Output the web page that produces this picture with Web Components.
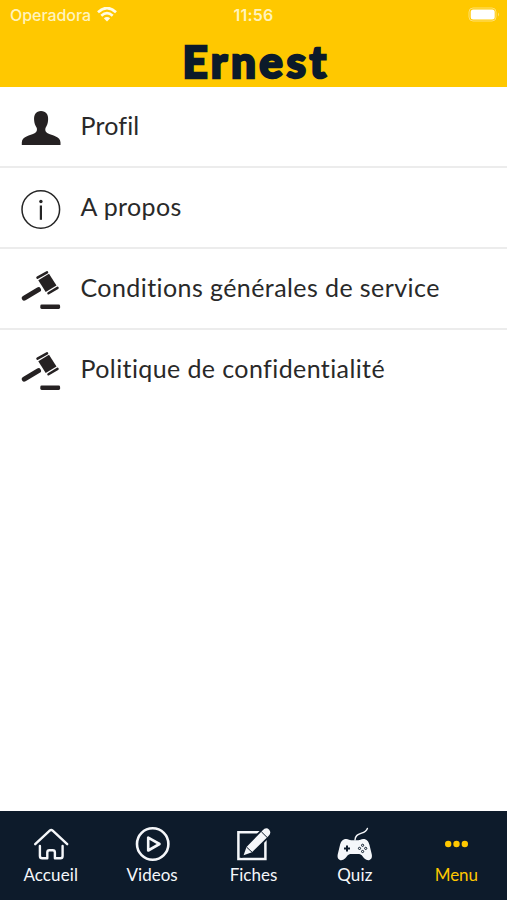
<!DOCTYPE html>
<html lang="fr"><head><meta charset="utf-8"><title>Ernest</title>
<style>
html,body{margin:0;height:100%;background:#fff}
body{font-family:Lato,"Liberation Sans",sans-serif}
</style></head><body>
<ernest-app></ernest-app>
<script>
const icons={
profile:'<path d="M20 1c-5 0-7.200 3.500-6.900 9 .2 3 1 5.500 2.700 8 .5 2-.1 4-1.800 5C9 25.500 .8 26.500 .8 32.500V35H39.500v-2.500c0-6-8.200-7-13.300-9.500-1.700-1-2.300-3-1.700-5 1.700-2.500 2.400-5 2.600-8 .5-5.500-2.100-9-7.100-9z" fill="#252122"/>',
info:'<circle cx="19.800" cy="19.500" r="18.800" fill="none" stroke="#252525" stroke-width="1.500"/><path d="M19.900 15.500v14.300" stroke="#252525" stroke-width="2.200"/><circle cx="19.900" cy="11.500" r="1.700" fill="#252525"/>',
gavel:'<g fill="none" stroke="#252122" stroke-linecap="round"><path d="M3.300 27.200L17.500 18.700" stroke-width="5"/><path d="M16.500 6.700L26 1.400M27.500 22.300L36.500 16.900" stroke-width="2.500"/></g><path d="M17.300 9.200L28 2.800 35.500 14.400 24.700 20.900z" fill="#252122"/><rect x="19.300" y="33.600" width="19.800" height="4.300" rx="1.400" fill="#252122"/>',
home:'<g fill="none" stroke="currentColor" stroke-width="2.400" stroke-linecap="round" stroke-linejoin="round"><path d="M2.200 17.200L16.700 3.600Q18.200 2.200 19.700 3.600L34.200 17.200"/><path d="M6.900 19V29Q6.900 31.300 9.200 31.300H14.300V25.500Q14.300 23.300 16.500 23.300H19.700Q21.900 23.300 21.900 25.500V31.300H27.500Q29.600 31.300 29.600 29V19"/></g>',
video:'<g fill="none" stroke="currentColor"><circle cx="17.700" cy="17" r="15.700" stroke-width="2.600"/><path d="M13.200 10.700V23.500L24.500 17z" stroke-width="2.600" stroke-linejoin="round"/></g>',
edit:'<path d="M2.400 5.200H29.400V32H2.400z" fill="none" stroke="currentColor" stroke-width="2.500"/><path d="M7.600 28.200L10.500 20 26.500 3.500Q30-.5 33.200 2.700 35.800 5.900 32.500 9L16 25.200z" fill="currentColor" stroke="#0d1b2b" stroke-width="3.500" paint-order="stroke"/><path d="M25.300 4.700L31.200 10.500M10.500 20L16 25.200" stroke="#0d1b2b" stroke-width="1"/>',
quiz:'<path d="M18 13c.2-5 3.500-5.500 6.500-6.800 3-1 5-2 5.900-4.700" fill="none" stroke="currentColor" stroke-width="1.400" stroke-linecap="round"/><path d="M9.300 12C5.500 12 4 14.500 3 18L.7 27.500C-.2 32 3 34.300 6.200 32.800 9.500 31 10.500 27 13.500 27H22C25 27 26 31 29.300 32.800 32.500 34.300 35.700 32 34.800 27.500L32.500 18C31.500 14.500 30 12 26.200 12 24 12 22.800 13.300 21.500 13.300H14C12.700 13.300 11.500 12 9.300 12z" fill="currentColor"/><path d="M10 18.400v6M7 21.400h6" stroke="#0d1b2b" stroke-width="2"/><g fill="none" stroke="#0d1b2b" stroke-width="1"><circle cx="25.600" cy="18.300" r="1.100"/><circle cx="25.600" cy="24.500" r="1.100"/><circle cx="22.500" cy="21.400" r="1.100"/><circle cx="28.700" cy="21.400" r="1.100"/></g>',
more:'<g fill="currentColor"><circle cx="9.200" cy="17" r="3.200"/><circle cx="17.500" cy="17" r="3.200"/><circle cx="25.800" cy="17" r="3.200"/></g>'};
function define(name,html){customElements.define(name,class extends HTMLElement{
 constructor(){super();this.attachShadow({mode:'open'}).innerHTML=typeof html==='function'?html(this):html}
})}
define('app-icon',e=>`<style>:host{display:block;flex:none;width:var(--w);height:var(--w)}svg{display:block;overflow:visible;width:100%;height:100%}</style><svg viewBox="0 0 ${e.getAttribute('size')} ${e.getAttribute('size')}">${icons[e.getAttribute('name')]}</svg>`);
define('status-bar',`<style>
:host{display:grid;grid-template-columns:1fr auto 1fr;align-items:center;height:30px;padding:0 7px 0 10px;color:#fff3bd;font:500 16px/30px Inter,sans-serif}
.left{display:flex;align-items:center;gap:6px;letter-spacing:-.05px}.time{font-weight:600;letter-spacing:.25px;margin-right:3px}
.wifi{width:20px;height:15px;margin-top:-1px}.battery{justify-self:end;width:32px;height:16px;margin-top:-3px}</style>
<div class="left"><span>Operadora</span><svg class="wifi" viewBox="0 0 20 15"><g fill="none" stroke="#fffbe6" stroke-width="2.700"><path d="M1 5.200Q10-3 19 5.200M4.300 8.700Q10 3.600 15.700 8.700"/></g><path d="M6.800 11.300Q10 8.500 13.200 11.300L10 14.400z" fill="#fffbe6"/></svg></div><span class="time">11:56</span>
<svg class="battery" viewBox="0 0 32 16"><rect x="1" y="2" width="27" height="13" rx="4" fill="none" stroke="#ffe070" stroke-width="1"/><rect x="2.700" y="3.500" width="24" height="10" rx="2.500" fill="#fff"/><path d="M30 6.500Q32 8.500 30 10.500z" fill="#ffe070"/></svg>`);
define('app-header',`<style>:host{display:block;height:87px;background:#ffc800;flex:none}h1{margin:0;text-align:center;color:#0b1a2a;font:900 44px/62px Lato,sans-serif;letter-spacing:3.500px;padding-left:5px;-webkit-text-stroke:2.400px #0b1a2a}</style><status-bar></status-bar><h1><slot></slot></h1>`);
define('menu-row',e=>`<style>:host{display:flex;box-sizing:border-box;height:81px;padding:21px 21px 0;gap:20px;border-bottom:2px solid #ececec;color:#292929}:host(:last-child){border:0}app-icon{--w:40px;margin-top:2px}:host(:not([icon=profile])) app-icon{margin-top:1px}span{font-size:25px;line-height:34px;white-space:nowrap;letter-spacing:var(--ls);margin-left:-.5px}</style><app-icon name="${e.getAttribute('icon')}" size="40"></app-icon><span><slot></slot></span>`);
define('tab-item',e=>`<style>:host{display:flex;flex:1;flex-direction:column;align-items:center;padding-top:16px;color:#f5f7fa}:host([active]){color:#ffc800}app-icon{--w:35px}span{font-size:17px;line-height:24px;letter-spacing:var(--ls);margin-top:1px}</style><app-icon name="${e.getAttribute('icon')}" size="35"></app-icon><span><slot></slot></span>`);
define('tab-bar',`<style>:host{display:flex;height:89px;background:#0d1b2b;flex:none}</style><slot></slot>`);
define('ernest-app',`<style>:host{display:flex;flex-direction:column;height:900px;background:#fff}main{flex:1}</style>
<app-header>Ernest</app-header><main><menu-row icon="profile" style="--ls:.15px">Profil</menu-row><menu-row icon="info" style="--ls:.35px">A propos</menu-row><menu-row icon="gavel" style="--ls:.42px">Conditions générales de service</menu-row><menu-row icon="gavel" style="--ls:.4px">Politique de confidentialité</menu-row></main>
<tab-bar><tab-item icon="home" style="--ls:.1px">Accueil</tab-item><tab-item icon="video">Videos</tab-item><tab-item icon="edit">Fiches</tab-item><tab-item icon="quiz" style="--ls:.2px">Quiz</tab-item><tab-item icon="more" active style="--ls:-.1px">Menu</tab-item></tab-bar>`);
</script></body></html>
